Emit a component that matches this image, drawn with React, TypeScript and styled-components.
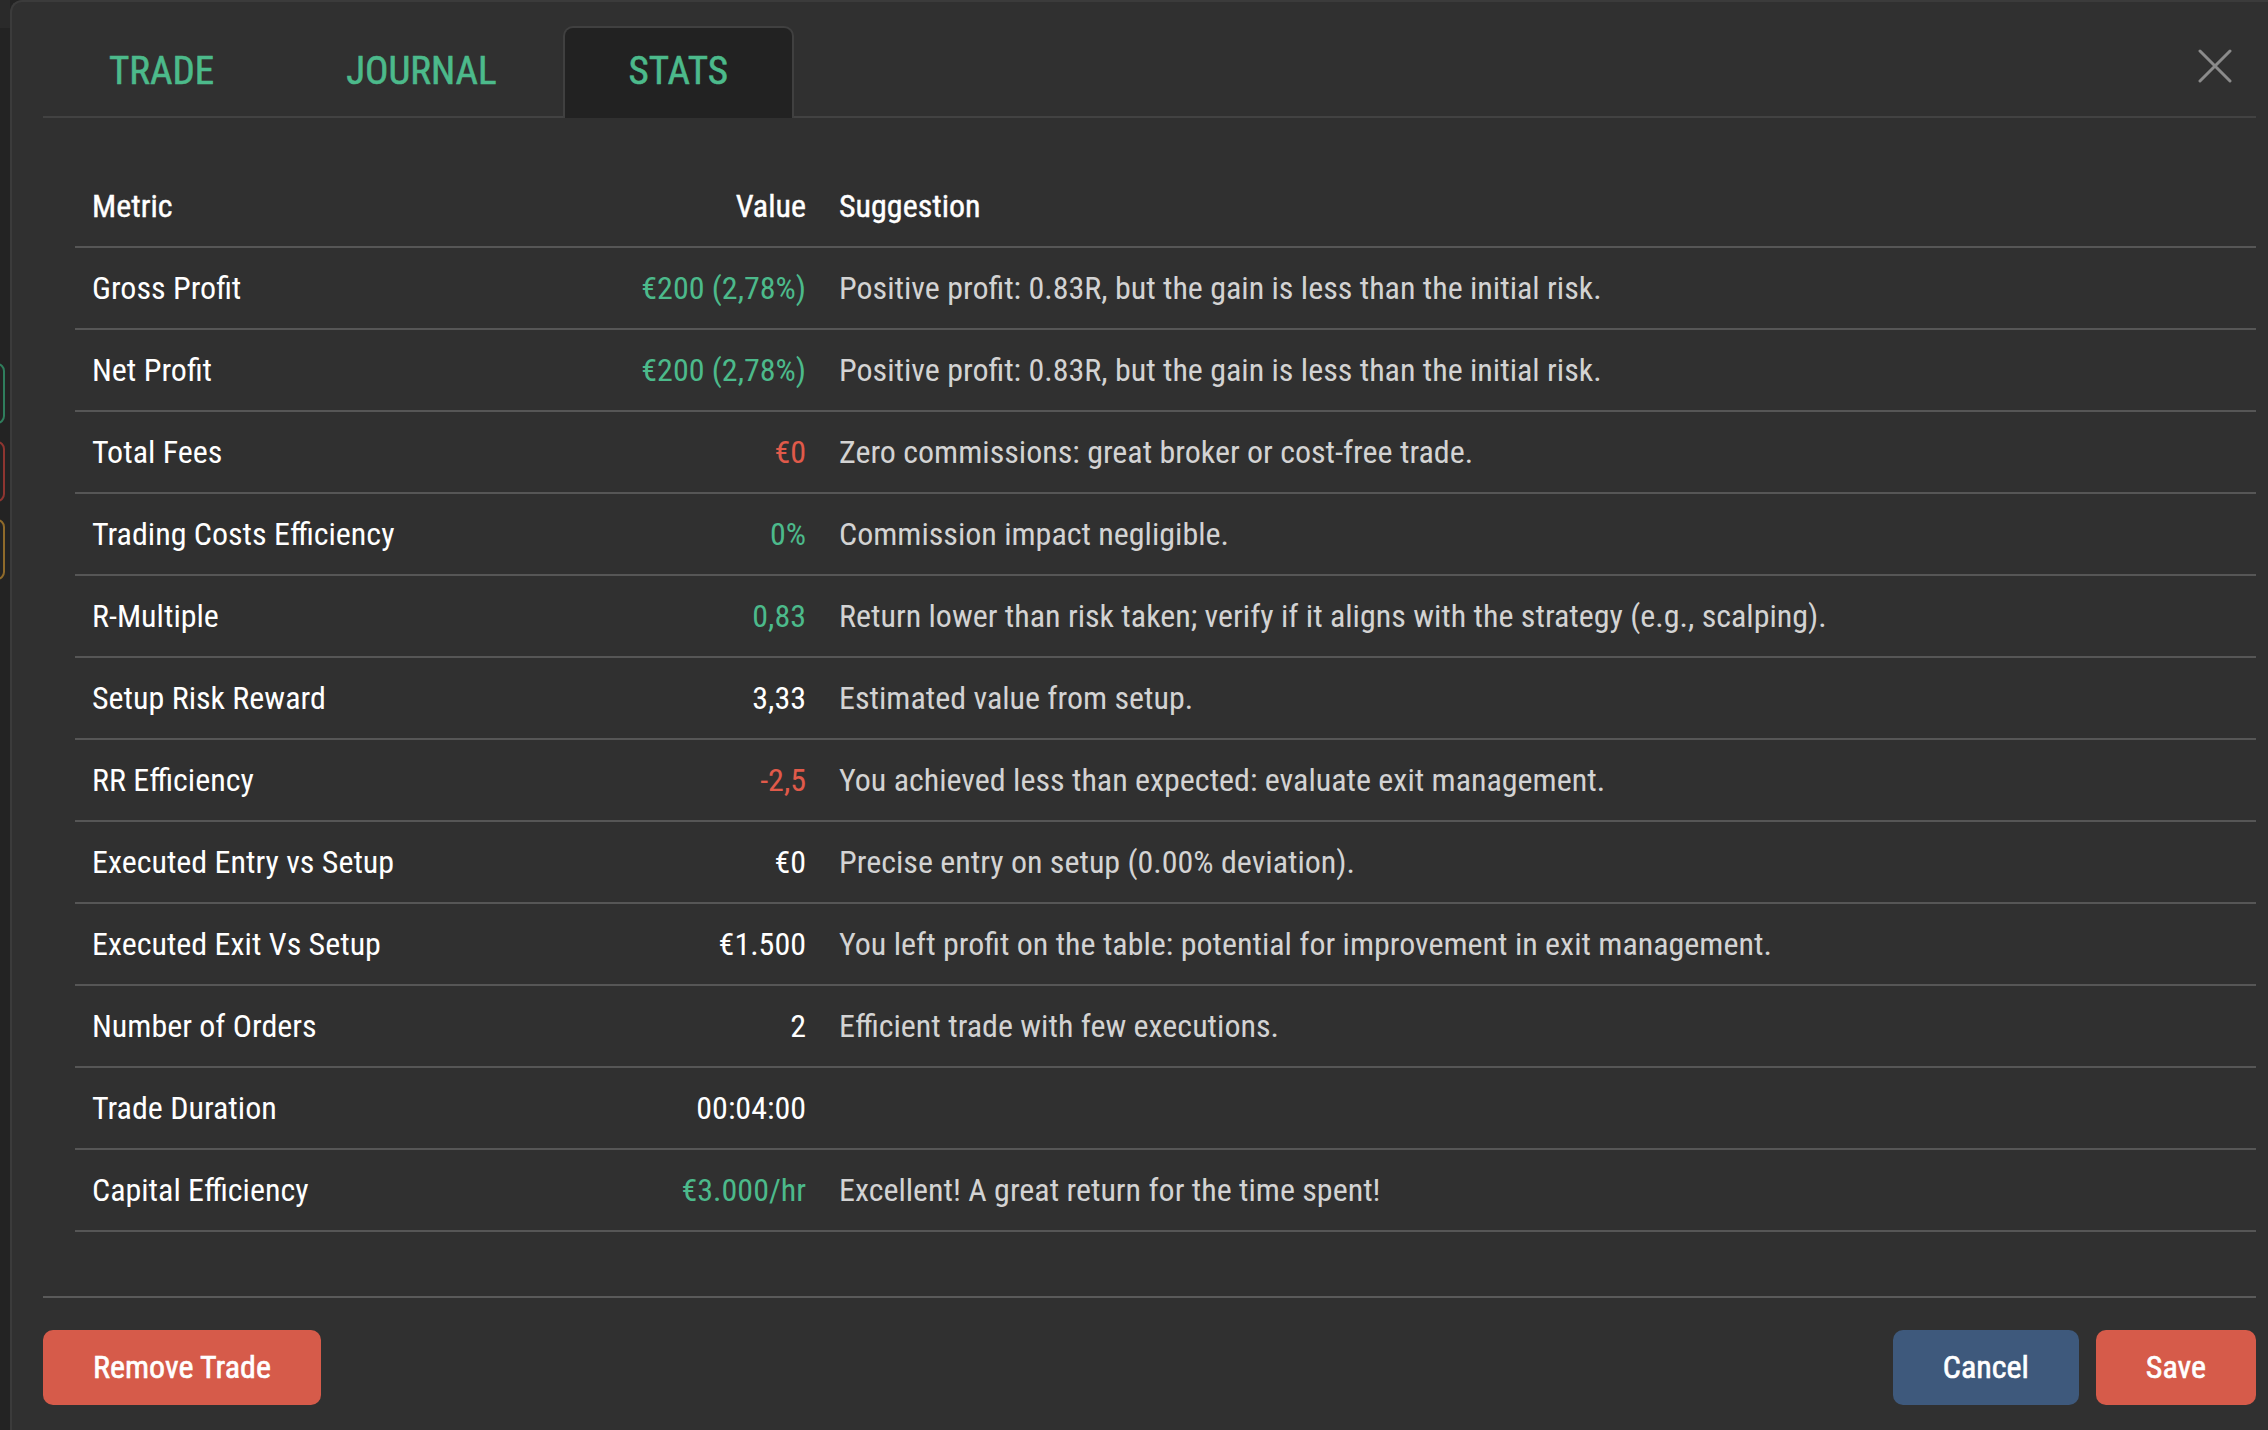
import React from "react";
import styled, { createGlobalStyle } from "styled-components";

const GlobalStyle = createGlobalStyle`
  html, body {
    margin: 0;
    padding: 0;
    width: 2268px;
    height: 1430px;
    overflow: hidden;
    background: #232323;
  }
  body {
    font-family: "Roboto Condensed", "Liberation Sans Narrow", "DejaVu Sans Condensed", Roboto, sans-serif;
    font-stretch: condensed;
    -webkit-font-smoothing: antialiased;
  }
  * { box-sizing: border-box; }
`;

const Page = styled.div`
  display: flex;
  width: 2268px;
  height: 1430px;
  overflow: hidden;
`;

const Backdrop = styled.div`
  width: 10px;
  flex: none;
  display: flex;
  flex-direction: column;
  gap: 17px;
  background: #232323;
  border-top: 28px solid #2a2a2a;
  padding-top: 335px;
`;

const GhostButton = styled.div<{ $tone: string }>`
  width: 24px;
  height: 61px;
  margin-left: -19px;
  border: 2px solid ${(p) => p.$tone};
  border-radius: 8px;
`;

const Modal = styled.div`
  flex: none;
  width: 2277px;
  height: 1430px;
  background: #303030;
  border-left: 2px solid #3b3b3b;
  border-top: 2px solid #3b3b3b;
  border-top-left-radius: 12px;
  padding: 0 31px 0 31px;
  display: flex;
  flex-direction: column;
`;

const Content = styled.div`
  width: 2213px;
  display: flex;
  flex-direction: column;
`;

const TabBar = styled.div`
  display: flex;
  align-items: flex-end;
  height: 116px;
  border-bottom: 2px solid #424242;
`;

const Tab = styled.div<{ $active?: boolean }>`
  height: 92px;
  margin-bottom: -2px;
  padding: 0 64px 4px;
  display: flex;
  align-items: center;
  justify-content: center;
  font-size: 39px;
  font-weight: 400;
  color: #4cba8b;
  -webkit-text-stroke: 0.6px #4cba8b;
  border: 2px solid ${(p) => (p.$active ? "#404040" : "transparent")};
  border-bottom: none;
  border-radius: 10px 10px 0 0;
  background: ${(p) => (p.$active ? "#222222" : "transparent")};
`;

const CloseButton = styled.button`
  margin-left: auto;
  margin-right: 24px;
  align-self: flex-start;
  margin-top: 47px;
  width: 34px;
  height: 34px;
  padding: 0;
  border: none;
  background: transparent;
  display: flex;
  align-items: center;
  justify-content: center;
`;

const Table = styled.div`
  margin-top: 48px;
  margin-left: 32px;
  display: flex;
  flex-direction: column;
`;

const Row = styled.div<{ $head?: boolean }>`
  display: grid;
  grid-template-columns: 420px 327px 1fr;
  height: 82px;
  align-items: center;
  border-bottom: 2px solid #565656;
  font-size: 32px;
  font-weight: 400;
  -webkit-text-stroke: ${(p) => (p.$head ? "0.4px currentColor" : "0")};
`;

const MetricCell = styled.div`
  padding-left: 17px;
  color: #ffffff;
  white-space: nowrap;
`;

const toneColor: Record<string, string> = {
  pos: "#4cba8b",
  neg: "#e05a4a",
  neutral: "#ffffff",
};

const ValueCell = styled.div<{ $tone: string }>`
  padding-right: 16px;
  text-align: right;
  color: ${(p) => toneColor[p.$tone]};
  white-space: nowrap;
`;

const SuggestionCell = styled.div<{ $head?: boolean }>`
  padding-left: 17px;
  color: ${(p) => (p.$head ? "#ffffff" : "#d3d3d3")};
  white-space: nowrap;
`;

const Footer = styled.div`
  margin-top: 64px;
  border-top: 2px solid #5a5a5a;
  padding-top: 32px;
  display: flex;
  align-items: center;
`;

const Actions = styled.div`
  margin-left: auto;
  display: flex;
  gap: 17px;
`;

const Button = styled.button<{ $variant: "danger" | "primary" }>`
  height: 75px;
  padding: 0 50px 2px;
  border: none;
  border-radius: 10px;
  font-family: inherit;
  font-stretch: condensed;
  font-size: 32px;
  font-weight: 400;
  color: #ffffff;
  -webkit-text-stroke: 0.6px #ffffff;
  background: ${(p) => (p.$variant === "danger" ? "#d65b4a" : "#3e597c")};
`;

type Tone = "pos" | "neg" | "neutral";

const rows: { metric: string; value: string; tone: Tone; suggestion: string }[] = [
  { metric: "Gross Profit", value: "€200 (2,78%)", tone: "pos", suggestion: "Positive profit: 0.83R, but the gain is less than the initial risk." },
  { metric: "Net Profit", value: "€200 (2,78%)", tone: "pos", suggestion: "Positive profit: 0.83R, but the gain is less than the initial risk." },
  { metric: "Total Fees", value: "€0", tone: "neg", suggestion: "Zero commissions: great broker or cost-free trade." },
  { metric: "Trading Costs Efficiency", value: "0%", tone: "pos", suggestion: "Commission impact negligible." },
  { metric: "R-Multiple", value: "0,83", tone: "pos", suggestion: "Return lower than risk taken; verify if it aligns with the strategy (e.g., scalping)." },
  { metric: "Setup Risk Reward", value: "3,33", tone: "neutral", suggestion: "Estimated value from setup." },
  { metric: "RR Efficiency", value: "-2,5", tone: "neg", suggestion: "You achieved less than expected: evaluate exit management." },
  { metric: "Executed Entry vs Setup", value: "€0", tone: "neutral", suggestion: "Precise entry on setup (0.00% deviation)." },
  { metric: "Executed Exit Vs Setup", value: "€1.500", tone: "neutral", suggestion: "You left profit on the table: potential for improvement in exit management." },
  { metric: "Number of Orders", value: "2", tone: "neutral", suggestion: "Efficient trade with few executions." },
  { metric: "Trade Duration", value: "00:04:00", tone: "neutral", suggestion: "" },
  { metric: "Capital Efficiency", value: "€3.000/hr", tone: "pos", suggestion: "Excellent! A great return for the time spent!" },
];

export default function App() {
  return (
    <>
      <GlobalStyle />
      <Page>
        <Backdrop>
          <GhostButton $tone="#2f7d5c" />
          <GhostButton $tone="#8e3530" />
          <GhostButton $tone="#8f6a2a" />
        </Backdrop>
        <Modal>
          <Content>
            <TabBar>
              <Tab>TRADE</Tab>
              <Tab>JOURNAL</Tab>
              <Tab $active>STATS</Tab>
              <CloseButton aria-label="Close">
                <svg width="34" height="34" viewBox="0 0 34 34">
                  <path d="M2 2 L32 32 M32 2 L2 32" stroke="#8b8b8b" strokeWidth="3" strokeLinecap="round" />
                </svg>
              </CloseButton>
            </TabBar>
            <Table>
              <Row $head>
                <MetricCell>Metric</MetricCell>
                <ValueCell $tone="neutral">Value</ValueCell>
                <SuggestionCell $head>Suggestion</SuggestionCell>
              </Row>
              {rows.map((r) => (
                <Row key={r.metric}>
                  <MetricCell>{r.metric}</MetricCell>
                  <ValueCell $tone={r.tone}>{r.value}</ValueCell>
                  <SuggestionCell>{r.suggestion}</SuggestionCell>
                </Row>
              ))}
            </Table>
            <Footer>
              <Button $variant="danger">Remove Trade</Button>
              <Actions>
                <Button $variant="primary">Cancel</Button>
                <Button $variant="danger">Save</Button>
              </Actions>
            </Footer>
          </Content>
        </Modal>
      </Page>
    </>
  );
}
